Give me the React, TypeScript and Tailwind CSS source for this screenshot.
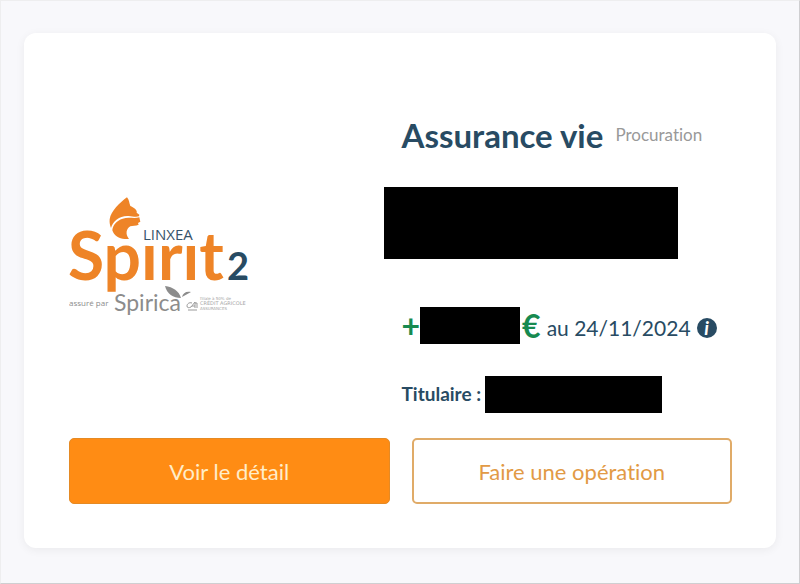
import { useState } from "react";

function Logo() {
  return (
    <svg
      role="img"
      aria-label="Linxea Spirit 2, assuré par Spirica"
      viewBox="0 0 182 122"
      className="w-[182px] h-[122px] font-['Lato',sans-serif]"
    >
      {/* lynx head */}
      <g transform="translate(-9 -7) scale(0.3333)" fill="#ee8427">
        <path d="M201 22 C180 38 153 62 149 88 C148 98 150 107 153 114 C159 92 180 76 206 78 C216 79 229 82 237 79 L238 74 L230 68 C233 61 220 51 211 48 C207 39 208 29 201 22Z" />
        <path d="M238 82 C222 87 205 80 188 86 C169 92 158 106 157 121 C161 136 178 147 194 147 L207 147 C195 133 199 115 211 109 C217 106 228 108 236 104 L234 99 L241 95Z" />
      </g>
      <text x="74" y="43" fontSize="15" fill="#36536a" fontFamily="Open Sans, sans-serif">
        LINXEA
      </text>
      <text x="-1" y="83" fontSize="66" fontWeight="700" fill="#ee8427">
        Spırıt
      </text>
      <text x="158" y="83" fontSize="38" fontWeight="700" fill="#284b63">
        2
      </text>
      <text x="0" y="109" fontSize="8" fill="#8c8c8c" fontFamily="Open Sans, sans-serif">
        assuré par
      </text>
      <text x="45" y="114" fontSize="23" fill="#8c8c8c">
        Spirica
      </text>
      {/* leaves */}
      <g fill="#8c8c8c">
        <path d="M96 89 C104 90 110 94 112 101 C104 101 98 97 96 89Z" />
        <path d="M113 100 C114 96 117 94 122 95 C119 97 116 98 113 100Z" />
      </g>
      {/* insurer mark */}
      <g fill="none" stroke="#999999" strokeWidth="1">
        <path d="M123 106 C120 105 118 107 118 109 C118 111 120 111 122 110 L126 105 V111 M123 109 H126 M126 106 H128 V111" />
        <path d="M119 113 H128" />
      </g>
      <g fill="#a6a6a6" fontFamily="DejaVu Sans, sans-serif">
        <text x="131" y="103" fontSize="4">filiale à 50% de</text>
        <text x="131" y="108" fontSize="5">CRÉDIT AGRICOLE</text>
        <text x="131" y="113" fontSize="4">ASSURANCES</text>
      </g>
    </svg>
  );
}

export default function App() {
  const [showInfo, setShowInfo] = useState<boolean>(false);

  return (
    <div className="min-h-screen border border-t-[#eeeeef] border-l-[#eeeeef] border-r-[#cfcfd1] border-b-[#cfcfd1] bg-[#f8f8fb] px-[23px] pt-8 pb-[35px] font-['Lato',sans-serif] text-[#284b63] [font-variant-ligatures:none]">
      <div className="rounded-xl bg-white pr-11 pl-[45px] pt-20 pb-11 shadow-[0_2px_10px_rgba(0,0,0,0.06)]">
        <div className="grid grid-cols-2">
          <div className="flex items-center pb-[10px]">
            <Logo />
          </div>

          <div className="pl-px">
            <div className="flex h-[43px] items-center gap-3">
              <h1 className="text-[33px] leading-10 font-bold">
                Assurance vie
              </h1>
              <span className="text-[17px] text-[#999999]">Procuration</span>
            </div>

            {/* hidden balance */}
            <div className="mt-[31px] -ml-[18px] h-[72px] w-[294px] bg-black" />

            <div className="mt-12 flex h-[37px] items-center text-[21px]">
              <span className="text-[32px] font-bold text-[#178a50]">+</span>
              <span className="h-[37px] w-[100px] bg-black" />
              <span className="ml-[2px] text-[32px] font-bold text-[#178a50]">
                €
              </span>
              <span className="ml-[6px] pt-1">au 24/11/2024</span>
              <button
                type="button"
                aria-label="Information"
                onClick={() => setShowInfo(!showInfo)}
                className="mt-1 ml-[6px] flex size-5 items-center justify-center rounded-full bg-[#284b63] text-[19px] leading-5 font-bold text-white italic"
              >
                i
              </button>
            </div>

            <div className="mt-8 flex h-[37px] items-center gap-1">
              <span className="text-[19px] font-bold">Titulaire :</span>
              <span className="h-[37px] w-[177px] bg-black" />
            </div>
          </div>
        </div>

        <div className="mt-[25px] grid grid-cols-2 gap-[22px] text-[22px]">
          <button
            type="button"
            className="h-[66px] rounded-[5px] border border-[#e58a24] bg-[#ff8c14] text-[#ffedc9]"
          >
            Voir le détail
          </button>
          <button
            type="button"
            className="h-[66px] rounded-[5px] border-2 border-[#e0ab68] bg-white text-[#e29a45]"
          >
            Faire une opération
          </button>
        </div>
      </div>
    </div>
  );
}
